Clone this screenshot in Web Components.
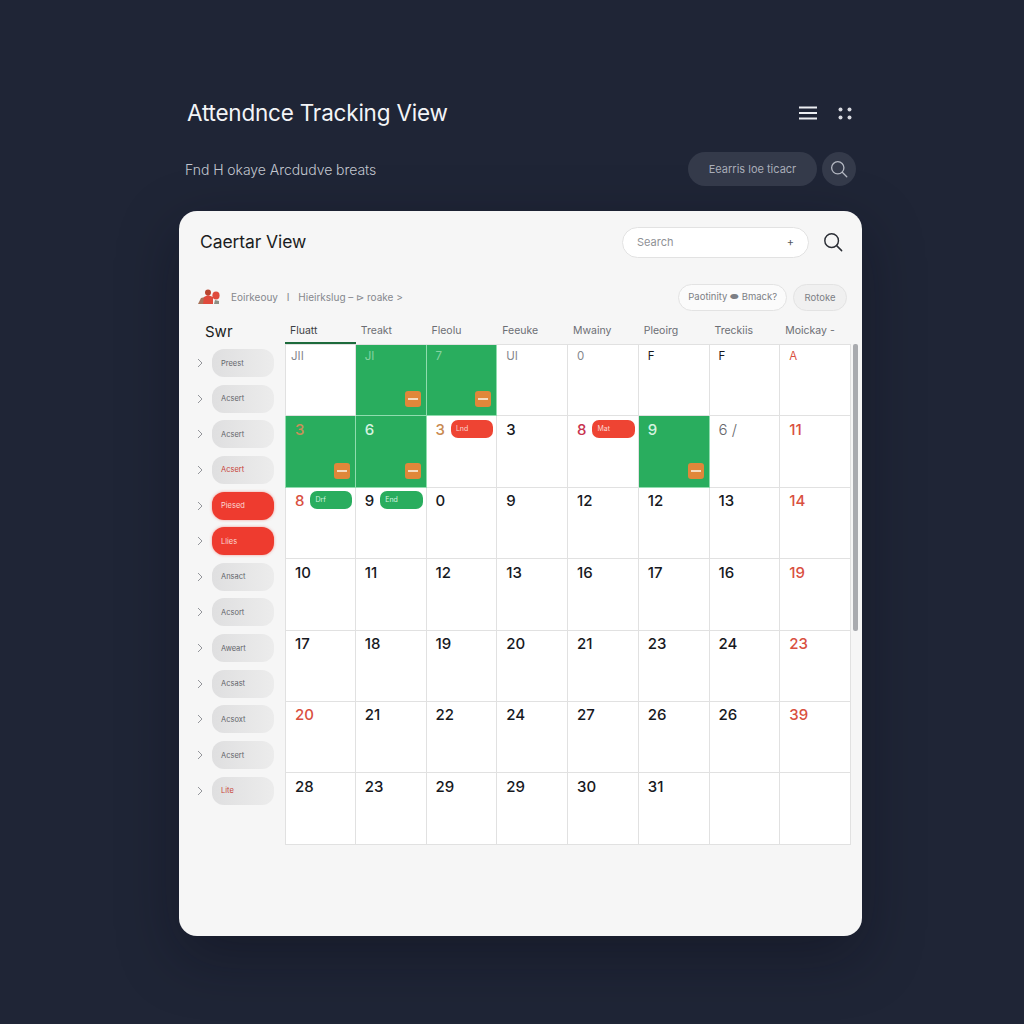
<!DOCTYPE html>
<html lang="en">
<head>
<meta charset="utf-8">
<title>Attendance Tracking View</title>
<style>
  html, body { margin: 0; background: #1f2536; }
  body { font-family: "Inter", "Noto Sans", sans-serif; }
</style>
</head>
<body>
<attendance-app></attendance-app>

<script>
const searchIcon = (color, size) => `
  <svg width="${size}" height="${size}" viewBox="0 0 22 22" fill="none" stroke="${color}" stroke-width="1.6" stroke-linecap="round">
    <circle cx="9.5" cy="9.5" r="7.5"/><path d="M15 15l5.5 5.5"/>
  </svg>`;

class TopHeader extends HTMLElement {
  constructor() {
    super();
    this.attachShadow({ mode: 'open' }).innerHTML = `
    <style>
      :host { display: block; padding: 98px 6px 0 8px; color: #eef0f4; }
      .row { display: flex; align-items: center; justify-content: space-between; }
      h1 { margin: 0; font-size: 22.5px; line-height: 30px; font-weight: 400; letter-spacing: -0.2px; color: #f3f4f7; }
      .icons { display: flex; align-items: center; gap: 21px; margin-right: 4px; }
      .sub { margin-top: 24px; height: 34px; margin-left: -2px; }
      .sub p { margin: 0; font-size: 14px; font-weight: 300; color: #c3c7d0; letter-spacing: -0.05px; }
      .tools { display: flex; align-items: center; gap: 5px; }
      .find { width: 129px; height: 34px; box-sizing: border-box; border-radius: 17px; background: #343a4a; color: #a9adb8; font-size: 11px; display: flex; align-items: center; justify-content: center; }
      .round { width: 34px; height: 34px; border-radius: 50%; background: #343a4a; display: flex; align-items: center; justify-content: center; }
      svg { display: block; }
    </style>
    <div class="row">
      <h1>Attendnce Tracking View</h1>
      <div class="icons">
        <svg width="18" height="14" viewBox="0 0 18 14" stroke="#eceef2" stroke-width="2"><path d="M0 1.5h18M0 7h18M0 12.5h18"/></svg>
        <svg width="14" height="13" viewBox="0 0 14 13" fill="#d8dae0"><circle cx="2.5" cy="2.5" r="2"/><circle cx="11.5" cy="2.5" r="2"/><circle cx="2.5" cy="10.5" r="2"/><circle cx="11.5" cy="10.5" r="2"/></svg>
      </div>
    </div>
    <div class="row sub">
      <p>Fnd H okaye Arcdudve breats</p>
      <div class="tools">
        <div class="find">Eearris loe ticacr</div>
        <div class="round">${searchIcon('#b4b8c2', 18)}</div>
      </div>
    </div>`;
  }
}

class CardHeader extends HTMLElement {
  constructor() {
    super();
    this.attachShadow({ mode: 'open' }).innerHTML = `
    <style>
      :host { display: flex; align-items: center; justify-content: space-between; height: 30px; padding: 16px 19px 0 21px; }
      h2 { margin: 0 0 2px; font-size: 17.5px; font-weight: 400; color: #1b1d22; letter-spacing: -0.1px; }
      .right { display: flex; align-items: center; gap: 14px; }
      .search { width: 187px; height: 31px; box-sizing: border-box; padding: 0 14px; display: flex; justify-content: space-between; align-items: center; background: #fff; border: 1px solid #e2e2e2; border-radius: 16px; font-size: 11px; color: #8f9196; }
      .search b { font-weight: 400; color: #55575c; }
      svg { display: block; }
    </style>
    <h2>Caertar View</h2>
    <div class="right">
      <div class="search"><span>Search</span><b>+</b></div>
      ${searchIcon('#2b2e35', 20)}
    </div>`;
  }
}

class FilterBar extends HTMLElement {
  constructor() {
    super();
    this.attachShadow({ mode: 'open' }).innerHTML = `
    <style>
      :host { display: flex; align-items: center; justify-content: space-between; height: 28px; margin-top: 26px; padding: 0 15px 0 19px; font-size: 10px; color: #85878d; }
      .crumbs { display: flex; align-items: center; gap: 11px; }
      .crumbs span + span { margin-left: -5px; }
      .btns { display: flex; gap: 6px; }
      .btn { height: 27px; box-sizing: border-box; display: flex; align-items: center; padding: 0 9px; background: #fbfbfb; border: 1px solid #e3e3e3; border-radius: 14px; color: #7d7f85; font-size: 9.5px; }
      .btn.alt { background: #f0f0f0; padding: 0 10.5px; }
      svg { display: block; }
    </style>
    <div class="crumbs">
      <svg width="22" height="16" viewBox="0 0 22 16">
        <path d="M0 15l3-6 4-1v7z" fill="#a8735a"/>
        <circle cx="10" cy="3.5" r="3" fill="#b9452f"/>
        <path d="M5 15l1-7 4-2 5 2v7z" fill="#df4a3c"/>
        <ellipse cx="18" cy="6.5" rx="3.6" ry="4" fill="#df4a3c"/>
        <path d="M16 15l1-4 4 1v3z" fill="#8d9086"/>
      </svg>
      <span>Eoirkeouy</span><span>&nbsp;I&nbsp;</span><span>Hieirkslug – ⊳ roake &gt;</span>
    </div>
    <div class="btns">
      <div class="btn">Paotinity ⬬ Bmack?</div>
      <div class="btn alt">Rotoke</div>
    </div>`;
  }
}

class StatusPill extends HTMLElement {
  constructor() {
    super();
    this.attachShadow({ mode: 'open' }).innerHTML = `
    <style>
      :host { display: flex; align-items: center; gap: 9px; height: 28px; font-size: 7.5px; color: #63656b; }
      .chev { width: 6px; height: 10px; flex: none; margin-left: 2px; }
      .pill { width: 62px; height: 28px; box-sizing: border-box; padding-left: 9px; display: flex; align-items: center; border-radius: 12px; background: linear-gradient(90deg, #dfdfe0, #ececec); }
      :host([tone="warn"]) .pill { color: #c8443a; }
      :host([tone="on"]) .pill { background: #ee3b2f; color: #fbd8d2; box-shadow: 0 0 3px rgba(238,59,47,.5); }
    </style>
    <svg class="chev" viewBox="0 0 6 10" fill="none" stroke="#94969b" stroke-width="1"><path d="M1 1l4 4-4 4"/></svg>
    <div class="pill"><slot></slot></div>`;
  }
}

class StatusList extends HTMLElement {
  constructor() {
    super();
    this.attachShadow({ mode: 'open' }).innerHTML = `
    <style>
      :host { display: flex; flex-direction: column; width: 106px; box-sizing: border-box; padding-left: 16px; flex: none; }
      .head { height: 30px; font-size: 15px; color: #1b1d22; padding-left: 10px; line-height: 26px; }
      .items { display: flex; flex-direction: column; gap: 7.65px; }
    </style>
    <div class="head">Swr</div>
    <div class="items"><slot></slot></div>`;
  }
}

class DayCell extends HTMLElement {
  constructor() {
    super();
    const tag = this.getAttribute('tag');
    const flag = this.hasAttribute('flag');
    this.attachShadow({ mode: 'open' }).innerHTML = `
    <style>
      :host { display: flex; flex-direction: column; justify-content: space-between; box-sizing: border-box; padding: 2px 3px 4px 9px; background: #fff; border-right: 1px solid #e1e1e1; border-bottom: 1px solid #e1e1e1; font-size: 15px; font-weight: 500; color: #17191e; min-width: 0; }
      :host([first]) { border-left: 1px solid #e1e1e1; }
      :host([tone="green"]) { background: #29ad5e; border-color: #8fdcae; color: #d5f3e0; }
      :host([tone="green"][dim]) { color: #c8905a; }
      :host([tone="red"]) { color: #d9503f; }
      :host([tone="muted"]) { color: #85878d; }
      :host([tone="thin"]) { color: #66686d; font-weight: 300; }
      :host([tone="amber"]) { color: #c98a52; }
      :host([tone="pink"]) { color: #c8334f; }
      :host([small]) { font-size: 11.5px; font-weight: 400; padding-top: 0; }
      :host([small][tone="green"]) { color: #86d3a2; }
      :host([small][first]) { padding-left: 5px; }
      .top { display: flex; align-items: center; gap: 6px; height: 22px; }
      .tag { height: 18px; flex: 1; min-width: 0; box-sizing: border-box; margin-top: -1px; padding-left: 5px; border-radius: 7px; font-size: 7px; font-weight: 400; line-height: 18px; }
      .tag.red { background: #ee4433; color: #fbd8d2; }
      .tag.green { background: #29ad5e; color: #d5f3e0; }
      .flag { align-self: flex-end; width: 16px; height: 16px; margin-right: 2px; margin-bottom: 4px; border-radius: 3px; background: #e0873a; display: flex; align-items: center; justify-content: center; }
      .flag i { display: block; width: 10px; height: 2px; background: #f6dcc0; }
    </style>
    <div class="top"><span><slot></slot></span>${tag ? `<div class="tag ${this.getAttribute('tag-tone')}">${tag}</div>` : ''}</div>
    ${flag ? '<div class="flag"><i></i></div>' : ''}`;
  }
}

class CalendarGrid extends HTMLElement {
  constructor() {
    super();
    const days = ['Fluatt', 'Treakt', 'Fleolu', 'Feeuke', 'Mwainy', 'Pleoirg', 'Treckiis', 'Moickay -'];
    this.attachShadow({ mode: 'open' }).innerHTML = `
    <style>
      :host { display: block; width: 577px; flex: none; position: relative; }
      .heads { display: grid; grid-template-columns: repeat(8, 70.75px); width: 566px; height: 25px; font-size: 10.5px; color: #6c6e74; }
      .heads div { padding-left: 5px; line-height: 23px; box-sizing: border-box; }
      .heads div:first-child { color: #3c3f45; border-bottom: 2px solid #1d6b3c; }
      .cells { display: grid; grid-template-columns: repeat(8, 70.75px); grid-auto-rows: 71.4px; width: 566px; border-top: 1px solid #e1e1e1; }
      .bar { position: absolute; left: 568px; top: 25px; width: 5px; height: 287px; background: #a9abaf; border-radius: 2px; }
    </style>
    <div class="heads">${days.map(d => `<div>${d}</div>`).join('')}</div>
    <div class="cells"><slot></slot></div>
    <div class="bar"></div>`;
  }
}

class AttendanceApp extends HTMLElement {
  constructor() {
    super();
    const shadow = this.attachShadow({ mode: 'open' });
    // [label, tone]
    const pills = [
      ['Preest', ''], ['Acsert', ''], ['Acsert', ''], ['Acsert', 'warn'], ['Piesed', 'on'], ['Llies', 'on'],
      ['Ansact', ''], ['Acsort', ''], ['Aweart', ''], ['Acsast', ''], ['Acsoxt', ''], ['Acsert', ''], ['Lite', 'warn']
    ];
    // text | tone | flag | tag | tag tone | dim
    const rows = [
      [['JII', 'muted'], ['JI', 'green', 1], ['7', 'green', 1], ['UI', 'muted'], ['0', 'muted'], ['F'], ['F'], ['A', 'red']],
      [['3', 'green', 1, '', '', 1], ['6', 'green', 1], ['3', 'amber', 0, 'Lnd', 'red'], ['3'], ['8', 'pink', 0, 'Mat', 'red'], ['9', 'green', 1], ['6 /', 'thin'], ['11', 'red']],
      [['8', 'red', 0, 'Drf', 'green'], ['9', '', 0, 'End', 'green'], ['0'], ['9'], ['12'], ['12'], ['13'], ['14', 'red']],
      [['10'], ['11'], ['12'], ['13'], ['16'], ['17'], ['16'], ['19', 'red']],
      [['17'], ['18'], ['19'], ['20'], ['21'], ['23'], ['24'], ['23', 'red']],
      [['20', 'red'], ['21'], ['22'], ['24'], ['27'], ['26'], ['26'], ['39', 'red']],
      [['28'], ['23'], ['29'], ['29'], ['30'], ['31'], [''], ['']]
    ];
    const cells = rows.map((row, r) => row.map(([text, tone, flag, tag, tagTone, dim], i) => {
      let attrs = tone ? ` tone="${tone}"` : '';
      if (flag) attrs += ' flag';
      if (dim) attrs += ' dim';
      if (tag) attrs += ` tag="${tag}" tag-tone="${tagTone}"`;
      if (i === 0) attrs += ' first';
      if (r === 0) attrs += ' small';
      return `<day-cell${attrs}>${text}</day-cell>`;
    }).join('')).join('');
    shadow.innerHTML = `
    <style>
      :host { display: block; height: 1024px; box-sizing: border-box; padding: 0 162px 0 179px; }
      .card { height: 725px; margin-top: 25px; background: #f6f6f6; border-radius: 18px; box-shadow: 0 20px 60px rgba(8,10,20,.35); box-sizing: border-box; overflow: hidden; }
      .body { display: flex; margin-top: 8px; }
    </style>
    <top-header></top-header>
    <div class="card">
      <card-header></card-header>
      <filter-bar></filter-bar>
      <div class="body">
        <status-list>${pills.map(([t, tone]) => `<status-pill${tone ? ` tone="${tone}"` : ''}>${t}</status-pill>`).join('')}</status-list>
        <calendar-grid>${cells}</calendar-grid>
      </div>
    </div>`;
  }
}

customElements.define('top-header', TopHeader);
customElements.define('card-header', CardHeader);
customElements.define('filter-bar', FilterBar);
customElements.define('status-pill', StatusPill);
customElements.define('status-list', StatusList);
customElements.define('day-cell', DayCell);
customElements.define('calendar-grid', CalendarGrid);
customElements.define('attendance-app', AttendanceApp);
</script>
</body>
</html>
